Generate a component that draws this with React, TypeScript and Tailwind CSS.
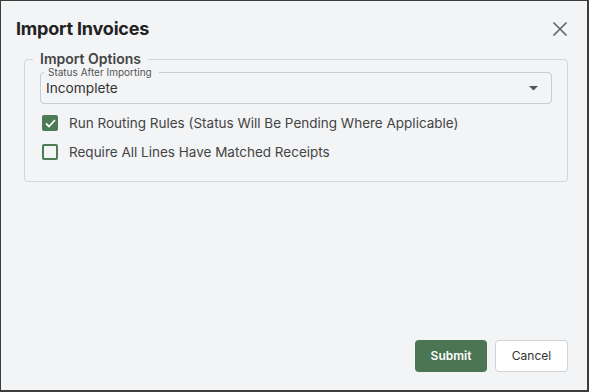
import React, { useState } from 'react';

const Check: React.FC<{ checked: boolean }> = ({ checked }) => (
  <span
    className={`w-[16px] h-[16px] shrink-0 rounded-[2px] border-2 border-[#4e7a56] flex items-center justify-center ${
      checked ? 'bg-[#4e7a56]' : 'bg-transparent'
    }`}
  >
    {checked && (
      <svg width="11" height="9" viewBox="0 0 11 9" fill="none" stroke="#fff" strokeWidth="1.8">
        <path d="M1 4.5 L4 7.5 L10 1" />
      </svg>
    )}
  </span>
);

const App: React.FC = () => {
  const [runRules, setRunRules] = useState(true);
  const [requireReceipts, setRequireReceipts] = useState(false);

  return (
    <div
      className="w-[589px] h-[392px] bg-[#f3f4f6] border-t border-l border-r-2 border-b-2 border-[#3c3c3c] flex flex-col text-[#333]"
      style={{ fontFamily: 'Inter, "Noto Sans", sans-serif' }}
    >
      {/* header */}
      <div className="flex items-center justify-between pl-[15px] pr-[19px] pt-[12px] h-[43px]">
        <h1 className="text-[18px] font-bold text-[#222] tracking-[-0.2px]">Import Invoices</h1>
        <button className="text-[#666] mt-[1px]">
          <svg width="16" height="16" viewBox="0 0 16 16" fill="none" stroke="currentColor" strokeWidth="1.7">
            <path d="M1.5 1.5 L14.5 14.5 M14.5 1.5 L1.5 14.5" />
          </svg>
        </button>
      </div>

      {/* options */}
      <div className="pl-[23px] pr-[19px] pt-[7px] flex-1">
        <fieldset className="border border-[#d4d6d9] rounded-[4px] px-[15px] pt-0 h-[131px]">
          <legend className="-ml-[7px] px-[7px] text-[14px] font-semibold text-[#444] leading-[16px]">Import Options</legend>

          <div className="relative mt-[5px] border border-[#c9cbcf] rounded-[4px] pl-[5px] pr-[13px] h-[32px] flex items-center justify-between">
            <span className="absolute -top-[6px] left-[3px] pl-[4px] pr-[7px] bg-[#f3f4f6] text-[10px] leading-[10px] text-[#555]">
              Status After Importing
            </span>
            <span className="text-[13.7px] text-[#333] mt-[1px]">Incomplete</span>
            <svg width="9" height="5" viewBox="0 0 9 5" className="text-[#555]">
              <path d="M0 0 L9 0 L4.5 4.5 Z" fill="currentColor" />
            </svg>
          </div>

          <label
            className="flex items-center gap-[11px] mt-[9px] ml-[2px] h-[20px] cursor-pointer"
            onClick={() => setRunRules(!runRules)}
          >
            <Check checked={runRules} />
            <span className="text-[13.5px] text-[#444]">Run Routing Rules (Status Will Be Pending Where Applicable)</span>
          </label>

          <label
            className="flex items-center gap-[11px] mt-[9px] ml-[2px] h-[20px] cursor-pointer"
            onClick={() => setRequireReceipts(!requireReceipts)}
          >
            <Check checked={requireReceipts} />
            <span className="text-[13.5px] text-[#444]">Require All Lines Have Matched Receipts</span>
          </label>
        </fieldset>
      </div>

      {/* footer */}
      <div className="flex justify-end gap-[8px] pr-[19px] pb-[18px]">
        <button className="w-[72px] h-[32px] rounded-[4px] bg-[#4b7553] text-white text-[12px] font-semibold">Submit</button>
        <button className="w-[73px] h-[32px] rounded-[4px] bg-white border border-[#d0d2d5] text-[#333] text-[12px]">Cancel</button>
      </div>
    </div>
  );
};

export default App;
